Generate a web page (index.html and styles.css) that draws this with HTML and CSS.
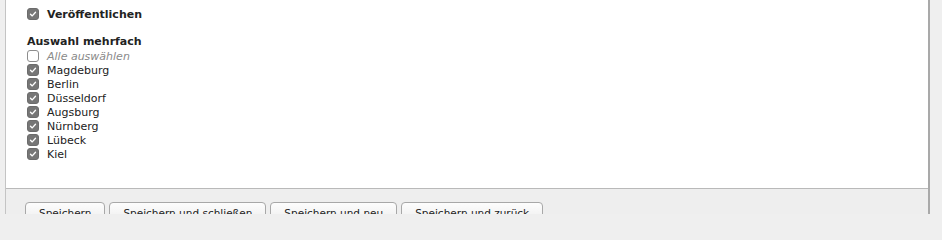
FILE: index.html
```html
<!DOCTYPE html>
<html lang="de">
<head>
<meta charset="utf-8">
<title>Formular</title>
<link rel="stylesheet" href="styles.css">
</head>
<body>
<div class="panel">
  <div class="content">
    <label class="row publish">
      <span class="cb on"><svg viewBox="0 0 12 12"><path d="M3 6.2 L5.1 8.3 L9 3.9" /></svg></span>
      <span class="lbl">Veröffentlichen</span>
    </label>
    <div class="heading">Auswahl mehrfach</div>
    <div class="list">
      <label class="row"><span class="cb"></span><span class="lbl all">Alle auswählen</span></label>
      <label class="row"><span class="cb on"><svg viewBox="0 0 12 12"><path d="M3 6.2 L5.1 8.3 L9 3.9" /></svg></span><span class="lbl">Magdeburg</span></label>
      <label class="row"><span class="cb on"><svg viewBox="0 0 12 12"><path d="M3 6.2 L5.1 8.3 L9 3.9" /></svg></span><span class="lbl">Berlin</span></label>
      <label class="row"><span class="cb on"><svg viewBox="0 0 12 12"><path d="M3 6.2 L5.1 8.3 L9 3.9" /></svg></span><span class="lbl">Düsseldorf</span></label>
      <label class="row"><span class="cb on"><svg viewBox="0 0 12 12"><path d="M3 6.2 L5.1 8.3 L9 3.9" /></svg></span><span class="lbl">Augsburg</span></label>
      <label class="row"><span class="cb on"><svg viewBox="0 0 12 12"><path d="M3 6.2 L5.1 8.3 L9 3.9" /></svg></span><span class="lbl">Nürnberg</span></label>
      <label class="row"><span class="cb on"><svg viewBox="0 0 12 12"><path d="M3 6.2 L5.1 8.3 L9 3.9" /></svg></span><span class="lbl">Lübeck</span></label>
      <label class="row"><span class="cb on"><svg viewBox="0 0 12 12"><path d="M3 6.2 L5.1 8.3 L9 3.9" /></svg></span><span class="lbl">Kiel</span></label>
    </div>
  </div>
  <div class="footer">
    <button class="btn">Speichern</button>
    <button class="btn">Speichern und schließen</button>
    <button class="btn">Speichern und neu</button>
    <button class="btn">Speichern und zurück</button>
  </div>
</div>
</body>
</html>
```
FILE: styles.css
```css
html, body {
  margin: 0;
  padding: 0;
  height: 214px;
  overflow: hidden;
}
body {
  background: #efefef;
  font-family: "DejaVu Sans", Verdana, sans-serif;
  font-size: 11px;
  color: #222;
}
.panel {
  margin-left: 5px;
  width: 922px;
  height: 214px;
  overflow: hidden;
  border-left: 1px solid #c4c4c4;
  border-right: 2px solid #a9a9a9;
  background: #fff;
  display: flex;
  flex-direction: column;
}
.content {
  padding: 7px 0 27px 21px;
}
.row {
  display: flex;
  align-items: center;
  height: 14px;
  gap: 8px;
}
.publish .lbl {
  font-weight: bold;
}
.heading {
  margin-top: 14px;
  height: 14px;
  line-height: 14px;
  font-weight: bold;
}
.cb {
  box-sizing: border-box;
  width: 12px;
  height: 12px;
  border-radius: 3px;
  border: 1px solid #8d8d8d;
  background: #fff;
  flex: none;
  display: flex;
}
.cb.on {
  background: #767676;
  border-color: #6c6c6c;
}
.cb svg {
  width: 10px;
  height: 10px;
  fill: none;
  stroke: #fff;
  stroke-width: 1.6;
  stroke-linecap: round;
  stroke-linejoin: round;
}
.lbl.all {
  font-style: italic;
  color: #8a8a8a;
}
.footer {
  flex: 1;
  border-top: 1px solid #b9b9b9;
  background: #eeeeee;
  padding: 13px 0 0 19px;
  display: flex;
  align-items: flex-start;
  gap: 4px;
}
.btn {
  font-family: "DejaVu Sans", Verdana, sans-serif;
  font-size: 10.5px;
  color: #222;
  height: 22px;
  padding: 0 13px;
  border: 1px solid #a8a8a8;
  border-radius: 4px;
  background: linear-gradient(#fdfdfd, #ececec);
}
```
